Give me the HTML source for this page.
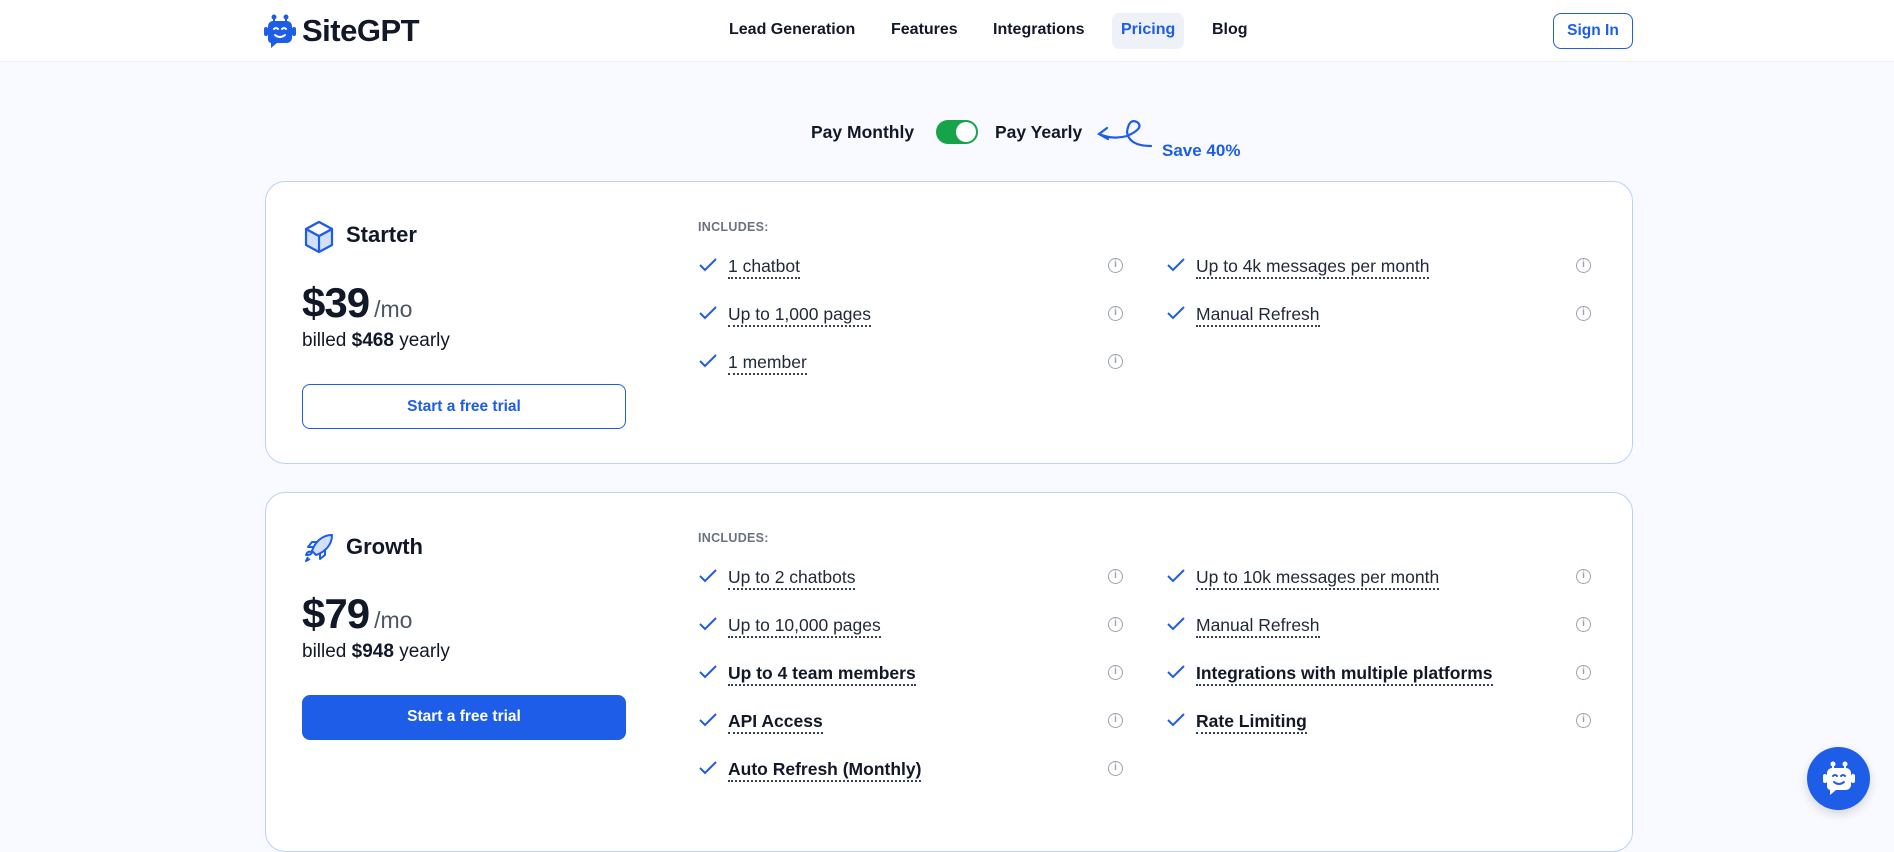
<!DOCTYPE html>
<html><head><meta charset="utf-8"><style>
*{box-sizing:border-box;margin:0;padding:0}
body{width:1894px;height:833px;overflow:hidden;background:#f8faff;font-family:"Liberation Sans",Arial,sans-serif;color:#111827;position:relative}
.abs{position:absolute}
.nav{position:absolute;left:0;top:0;width:1894px;height:62px;background:#fff;border-bottom:1px solid #eef0f5}
.nl{position:absolute;top:21px;font-size:16px;font-weight:600;color:#111827}
.card{position:absolute;left:265px;width:1368px;background:#fff;border:1.5px solid #bcd0fb;border-radius:20px}
.inc{position:absolute;left:432px;font-size:12.5px;font-weight:600;color:#6b7280;letter-spacing:.3px}
.f{position:absolute;font-size:17.5px;color:#1f2937;height:24px;white-space:nowrap}
.f svg.c{position:absolute;left:0;top:2px}
.f span{position:absolute;left:30px;top:0;border-bottom:2px dotted #374151;line-height:22px}
.f.b span{font-weight:700;color:#111827}
.i{position:absolute;top:3px;width:15px;height:15px;border:1.5px solid #9ca3af;border-radius:50%;font-size:10px;color:#9ca3af;text-align:center;line-height:12px;font-weight:700}
.title{position:absolute;left:80px;font-size:22px;font-weight:600}
.price{position:absolute;left:36px;font-size:42px;font-weight:700;letter-spacing:-1px}
.price small{font-size:23px;font-weight:400;color:#4b5563;letter-spacing:0;margin-left:5px}
.billed{position:absolute;left:36px;font-size:19px}
.btn{position:absolute;left:36px;width:324px;height:45px;border-radius:8px;font-size:15.5px;font-weight:600;text-align:center;line-height:43px}
</style></head><body>
<div class="nav">
 <svg class="abs" style="left:264px;top:14px" width="32" height="34" viewBox="0 0 32 34"><circle cx="10" cy="3" r="2.5" fill="#1d5de8"/><circle cx="22" cy="3" r="2.5" fill="#1d5de8"/><rect x="9" y="3" width="2" height="5" fill="#1d5de8"/><rect x="21" y="3" width="2" height="5" fill="#1d5de8"/><rect x="0" y="13" width="4" height="9" rx="2" fill="#1d5de8"/><rect x="28" y="13" width="4" height="9" rx="2" fill="#1d5de8"/><path d="M9 7h14a5 5 0 0 1 5 5v12a5 5 0 0 1-5 5H13l-6 5v-5a4 4 0 0 1-3-4V12a5 5 0 0 1 5-5z" fill="#1d5de8"/><path d="M10 15q2-2 4 0M18 15q2-2 4 0M11 21q5 4 10 0" stroke="#fff" stroke-width="2" fill="none" stroke-linecap="round"/></svg>
 <div class="abs" style="left:302px;top:13px;font-size:31px;font-weight:700;letter-spacing:-.5px">SiteGPT</div>
 <div class="nl" style="left:729px">Lead Generation</div>
 <div class="nl" style="left:891px">Features</div>
 <div class="nl" style="left:993px">Integrations</div>
 <div class="abs" style="left:1112px;top:13px;width:72px;height:36px;background:#eef1f7;border-radius:7px"></div>
 <div class="nl" style="left:1121px;color:#1d5de8">Pricing</div>
 <div class="nl" style="left:1212px">Blog</div>
 <div class="abs" style="left:1553px;top:13px;width:80px;height:36px;border:1.5px solid #1d5de8;border-radius:8px;color:#1d5de8;font-size:15.5px;font-weight:600;text-align:center;line-height:33px">Sign In</div>
</div>
<div class="abs" style="left:811px;top:122px;font-size:17.5px;font-weight:600">Pay Monthly</div>
<div class="abs" style="left:936px;top:120px;width:42px;height:24px;border-radius:12px;background:#16a34a"><div class="abs" style="left:20px;top:2px;width:20px;height:20px;border-radius:50%;background:#fff"></div></div>
<div class="abs" style="left:995px;top:122px;font-size:17.5px;font-weight:600">Pay Yearly</div>
<svg class="abs" style="left:1095px;top:118px" width="65" height="35" viewBox="0 0 65 35"><path d="M4 16q14 6 28 2q18-8 10-14q-8-4-10 10q2 14 24 14" stroke="#1d5de8" stroke-width="2.2" fill="none" stroke-linecap="round"/><path d="M12 10L4 16l9 5" stroke="#1d5de8" stroke-width="2.2" fill="none" stroke-linecap="round"/></svg>
<div class="abs" style="left:1162px;top:141px;font-size:17px;font-weight:600;color:#1d5de8">Save 40%</div>

<div class="card" style="top:181px;height:283px">
 <svg class="abs" style="left:37px;top:38px" width="32" height="34" viewBox="0 0 32 34"><path d="M16 2L29 9v16L16 32 3 25V9z" fill="#d3e0fc" stroke="#1d5de8" stroke-width="2.2" stroke-linejoin="round"/><path d="M3 9l13 7 13-7M16 16v16" stroke="#1d5de8" stroke-width="2.2" fill="none"/><path d="M16 2L29 9 16 16 3 9z" fill="#fff" stroke="#1d5de8" stroke-width="2.2" stroke-linejoin="round"/></svg>
 <div class="title" style="top:40px">Starter</div>
 <div class="price" style="top:97px">$39<small>/mo</small></div>
 <div class="billed" style="top:148px">billed <b>$468</b> yearly</div>
 <div class="btn" style="top:202px;border:1.5px solid #1d5de8;color:#1d5de8">Start a free trial</div>
 <div class="inc" style="top:38px">INCLUDES:</div>
 <div class="f" style="left:432px;top:73px"><svg class="c" width="20" height="16"><path d="M2 8l5 5L18 2" stroke="#1d5de8" stroke-width="2" fill="none"/></svg><span>1 chatbot</span><div class="i" style="left:410px">i</div></div>
 <div class="f" style="left:432px;top:121px"><svg class="c" width="20" height="16"><path d="M2 8l5 5L18 2" stroke="#1d5de8" stroke-width="2" fill="none"/></svg><span>Up to 1,000 pages</span><div class="i" style="left:410px">i</div></div>
 <div class="f" style="left:432px;top:169px"><svg class="c" width="20" height="16"><path d="M2 8l5 5L18 2" stroke="#1d5de8" stroke-width="2" fill="none"/></svg><span>1 member</span><div class="i" style="left:410px">i</div></div>
 <div class="f" style="left:900px;top:73px"><svg class="c" width="20" height="16"><path d="M2 8l5 5L18 2" stroke="#1d5de8" stroke-width="2" fill="none"/></svg><span>Up to 4k messages per month</span><div class="i" style="left:410px">i</div></div>
 <div class="f" style="left:900px;top:121px"><svg class="c" width="20" height="16"><path d="M2 8l5 5L18 2" stroke="#1d5de8" stroke-width="2" fill="none"/></svg><span>Manual Refresh</span><div class="i" style="left:410px">i</div></div>
</div>

<div class="card" style="top:492px;height:360px">
 <svg class="abs" style="left:37px;top:39px" width="32" height="32" viewBox="0 0 32 32"><path d="M9 20c-3-1-5 0-6 3 3 0 5 0 6-3zM13 23l-4-4C12 10 19 3 29 3c0 10-7 17-16 20z" fill="#d3e0fc" stroke="#1d5de8" stroke-width="2" stroke-linejoin="round"/><path d="M10 15H5l4-5h6M17 22v5l5-4v-6M7 27l-4 2 2-4" stroke="#1d5de8" stroke-width="2" fill="none" stroke-linejoin="round"/></svg>
 <div class="title" style="top:41px">Growth</div>
 <div class="price" style="top:97px">$79<small>/mo</small></div>
 <div class="billed" style="top:148px">billed <b>$948</b> yearly</div>
 <div class="btn" style="top:202px;background:#1d5de8;color:#fff">Start a free trial</div>
 <div class="inc" style="top:38px">INCLUDES:</div>
 <div class="f" style="left:432px;top:73px"><svg class="c" width="20" height="16"><path d="M2 8l5 5L18 2" stroke="#1d5de8" stroke-width="2" fill="none"/></svg><span>Up to 2 chatbots</span><div class="i" style="left:410px">i</div></div>
 <div class="f" style="left:432px;top:121px"><svg class="c" width="20" height="16"><path d="M2 8l5 5L18 2" stroke="#1d5de8" stroke-width="2" fill="none"/></svg><span>Up to 10,000 pages</span><div class="i" style="left:410px">i</div></div>
 <div class="f b" style="left:432px;top:169px"><svg class="c" width="20" height="16"><path d="M2 8l5 5L18 2" stroke="#1d5de8" stroke-width="2" fill="none"/></svg><span>Up to 4 team members</span><div class="i" style="left:410px">i</div></div>
 <div class="f b" style="left:432px;top:217px"><svg class="c" width="20" height="16"><path d="M2 8l5 5L18 2" stroke="#1d5de8" stroke-width="2" fill="none"/></svg><span>API Access</span><div class="i" style="left:410px">i</div></div>
 <div class="f b" style="left:432px;top:265px"><svg class="c" width="20" height="16"><path d="M2 8l5 5L18 2" stroke="#1d5de8" stroke-width="2" fill="none"/></svg><span>Auto Refresh (Monthly)</span><div class="i" style="left:410px">i</div></div>
 <div class="f" style="left:900px;top:73px"><svg class="c" width="20" height="16"><path d="M2 8l5 5L18 2" stroke="#1d5de8" stroke-width="2" fill="none"/></svg><span>Up to 10k messages per month</span><div class="i" style="left:410px">i</div></div>
 <div class="f" style="left:900px;top:121px"><svg class="c" width="20" height="16"><path d="M2 8l5 5L18 2" stroke="#1d5de8" stroke-width="2" fill="none"/></svg><span>Manual Refresh</span><div class="i" style="left:410px">i</div></div>
 <div class="f b" style="left:900px;top:169px"><svg class="c" width="20" height="16"><path d="M2 8l5 5L18 2" stroke="#1d5de8" stroke-width="2" fill="none"/></svg><span>Integrations with multiple platforms</span><div class="i" style="left:410px">i</div></div>
 <div class="f b" style="left:900px;top:217px"><svg class="c" width="20" height="16"><path d="M2 8l5 5L18 2" stroke="#1d5de8" stroke-width="2" fill="none"/></svg><span>Rate Limiting</span><div class="i" style="left:410px">i</div></div>
</div>

<div class="abs" style="left:1807px;top:747px;width:63px;height:63px;border-radius:50%;background:#1d5de8;box-shadow:0 4px 10px rgba(0,0,0,.15)">
 <svg class="abs" style="left:16px;top:14px" width="32" height="34" viewBox="0 0 32 34"><circle cx="10" cy="3" r="2.5" fill="#fff"/><circle cx="22" cy="3" r="2.5" fill="#fff"/><rect x="9" y="3" width="2" height="5" fill="#fff"/><rect x="21" y="3" width="2" height="5" fill="#fff"/><rect x="0" y="13" width="4" height="9" rx="2" fill="#fff"/><rect x="28" y="13" width="4" height="9" rx="2" fill="#fff"/><path d="M9 7h14a5 5 0 0 1 5 5v12a5 5 0 0 1-5 5H13l-6 5v-5a4 4 0 0 1-3-4V12a5 5 0 0 1 5-5z" fill="#fff"/><path d="M10 15q2-2 4 0M18 15q2-2 4 0M11 21q5 4 10 0" stroke="#1d5de8" stroke-width="2" fill="none" stroke-linecap="round"/></svg>
</div>
</body></html>
